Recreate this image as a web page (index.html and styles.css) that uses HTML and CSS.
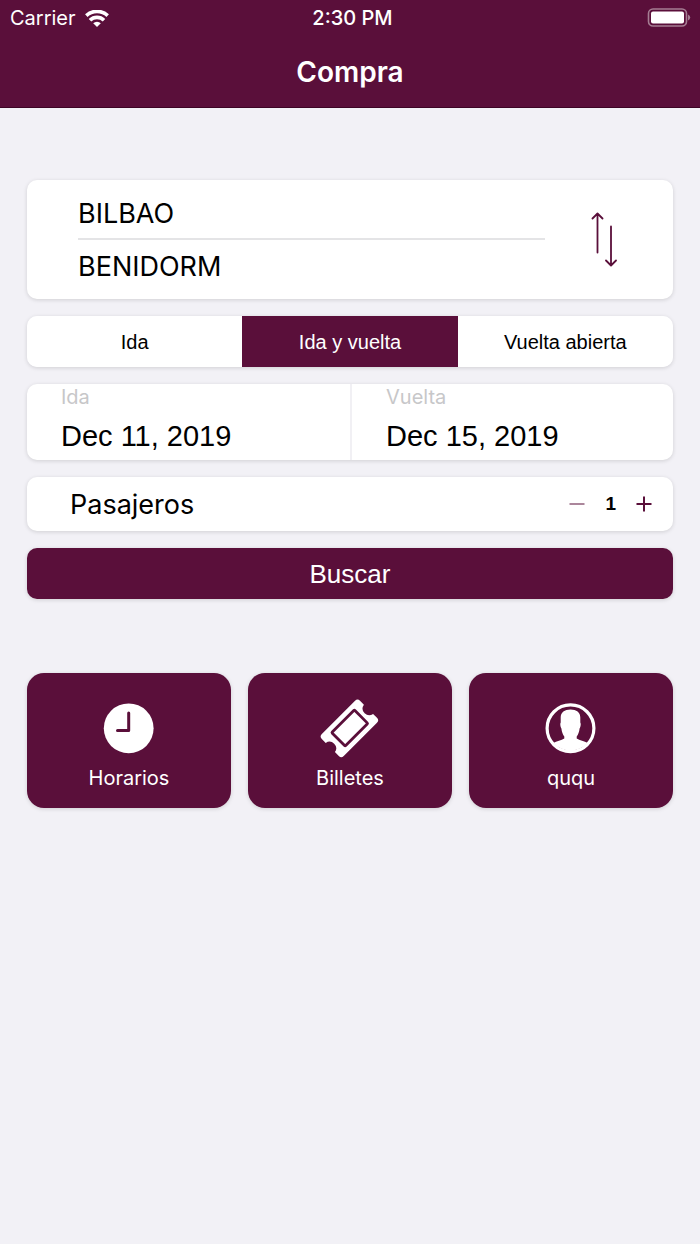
FILE: index.html
```html
<!DOCTYPE html>
<html lang="es">
<head>
<meta charset="utf-8">
<meta name="viewport" content="width=device-width, initial-scale=1">
<title>Compra</title>
<link rel="stylesheet" href="styles.css">
</head>
<body>
<header class="header">
  <div class="status">
    <div class="status-carrier">
      <span>Carrier</span>
      <svg class="wifi" viewBox="0 0 24 17" aria-hidden="true">
        <g fill="none" stroke="#fff" stroke-width="3.6">
          <path d="M1.3 5.600A15.600 15.600 0 0 1 22.700 5.600"/>
          <path d="M5 10.200A10 10 0 0 1 19 10.200"/>
        </g>
        <path fill="#fff" d="M12 17L8.200 13.200A5.400 5.400 0 0 1 15.800 13.200Z"/>
      </svg>
    </div>
    <time class="status-time">2:30 PM</time>
    <svg class="battery" viewBox="0 0 44 20" aria-hidden="true">
      <rect x="1.500" y="1" width="38" height="17" rx="4.5" fill="none" stroke="#a57d93" stroke-width="1.6"/>
      <rect x="4" y="3.5" width="33" height="12" rx="2" fill="#fff"/>
      <path d="M41 6.5Q43.2 7.4 43.2 9.5T41 12.500Z" fill="#a57d93"/>
    </svg>
  </div>
  <h1 class="title">Compra</h1>
</header>
<main class="main">
  <form class="search">
    <section class="card route">
      <div class="cities">
        <input class="city" type="text" value="BILBAO" aria-label="Origen">
        <input class="city" type="text" value="BENIDORM" aria-label="Destino">
      </div>
      <button class="swap" type="button" aria-label="Intercambiar">
        <svg class="swap-icon" viewBox="0 0 28 56" aria-hidden="true">
          <path d="M7.500 40.500V1.500M2.500 6.500L7.500 1.500L12.500 6.500M21 14.500V53M16 48.500L21 53.500L26 48.500"/>
        </svg>
      </button>
    </section>
    <fieldset class="card trip" aria-label="Tipo de viaje">
      <label class="trip-option"><input class="trip-radio" type="radio" name="trip"><span class="trip-text">Ida</span></label>
      <label class="trip-option"><input class="trip-radio" type="radio" name="trip" checked><span class="trip-text">Ida y vuelta</span></label>
      <label class="trip-option"><input class="trip-radio" type="radio" name="trip"><span class="trip-text">Vuelta abierta</span></label>
    </fieldset>
    <section class="card dates">
      <div class="date">
        <label class="date-label" for="depart">Ida</label>
        <input class="date-value" id="depart" type="text" value="Dec 11, 2019">
      </div>
      <div class="date">
        <label class="date-label" for="return">Vuelta</label>
        <input class="date-value" id="return" type="text" value="Dec 15, 2019">
      </div>
    </section>
    <section class="card passengers">
      <span class="passengers-label" id="passengers">Pasajeros</span>
      <div class="stepper" role="group" aria-labelledby="passengers">
        <button class="step" type="button" aria-label="Menos" disabled>
          <svg class="step-icon" viewBox="0 0 16 16" aria-hidden="true"><path d="M.5 8H15.500"/></svg>
        </button>
        <output class="count">1</output>
        <button class="step" type="button" aria-label="Más">
          <svg class="step-icon" viewBox="0 0 16 16" aria-hidden="true"><path d="M.5 8H15.500M8 .5V15.500"/></svg>
        </button>
      </div>
    </section>
    <button class="submit" type="button">Buscar</button>
  </form>
  <nav class="tiles">
    <a class="tile" href="#horarios">
      <svg class="tile-icon" viewBox="0 0 60 60" aria-hidden="true">
        <circle cx="29.700" cy="30.300" r="24.900" fill="#fff"/>
        <path d="M29.700 15V32.500H18.500" fill="none" stroke="#5a0f3a" stroke-width="3" stroke-linecap="round" stroke-linejoin="round"/>
      </svg>
      <span>Horarios</span>
    </a>
    <a class="tile" href="#billetes">
      <svg class="tile-icon" viewBox="0 0 60 60" aria-hidden="true">
        <g transform="translate(-.6 .4) rotate(-45 30 30)">
          <path fill="#fff" d="M6.500 14.500H53.500Q57 14.500 57 18V23.500A6.600 6.600 0 0 0 57 36.500V42Q57 45.500 53.500 45.500H6.500Q3 45.500 3 42V36.500A6.600 6.600 0 0 0 3 23.500V18Q3 14.500 6.500 14.500Z"/>
          <rect x="14.500" y="20.500" width="32" height="19" rx=".8" fill="none" stroke="#5a0f3a" stroke-width="2.800"/>
        </g>
      </svg>
      <span>Billetes</span>
    </a>
    <a class="tile" href="#perfil">
      <svg class="tile-icon" viewBox="0 0 60 60" aria-hidden="true">
        <circle cx="29.500" cy="30.300" r="23.400" fill="none" stroke="#fff" stroke-width="3.200"/>
        <path fill="#fff" d="M29.500 11.500C35.500 11.500 39.500 14.500 39.300 20V24.500C40.100 25.500 39.700 28.500 38.600 30.500C38.200 34 37.200 36.500 35.700 38.500V40.500C38.500 42.500 43.500 43 46.700 45A23.500 23.500 0 0 1 12.300 45C15.500 43 20.500 42.500 23.300 40.500V38.500C21.800 36.500 20.800 34 20.400 30.500C19.300 28.500 18.900 25.500 19.700 24.500V20C19.500 14.500 23.500 11.500 29.500 11.500Z"/>
      </svg>
      <span>ququ</span>
    </a>
  </nav>
</main>
</body>
</html>
```
FILE: styles.css
```css
:root {
  --brand: #5a0f3a;
  --page: #f2f1f6;
  --sans: Inter, Roboto, sans-serif;
  --arial: "Liberation Sans", Arial, sans-serif;
}
* { box-sizing: border-box; }
body {
  margin: 0;
  background: var(--page);
  color: #000;
  font-family: var(--sans);
}
button, input { font: inherit; color: inherit; margin: 0; padding: 0; border: 0; background: none; }
button { cursor: pointer; }
.header {
  background: var(--brand);
  color: #fff;
  border-bottom: 1px solid #3d0425;
}
.status {
  display: grid;
  grid-template-columns: 1fr auto 1fr;
  align-items: center;
  height: 36px;
  padding: 0 9px 0 10px;
  font-size: 20px;
}
.status-carrier { display: flex; align-items: center; gap: 9px; }
.wifi { width: 24px; height: 17px; }
.battery { width: 44px; height: 20px; justify-self: end; }
.status-time { font-weight: 500; padding-left: 4px; }
.title {
  margin: 0;
  padding-top: 1px;
  font-size: 28px;
  line-height: 70px;
  font-weight: 600;
  text-align: center;
}
.main { padding: 72px 27px; }
.search { display: flex; flex-direction: column; gap: 17px; }
.card {
  margin: 0;
  padding: 0;
  border: 0;
  border-radius: 10px;
  background: #fff;
  box-shadow: 0 1px 4px rgba(0, 0, 0, .14);
}
.route { display: flex; padding: 8px 0 7px 51px; }
.cities { flex: 1; min-width: 0; }
.city { display: block; width: 100%; height: 52px; font-size: 27px; }
.city:first-child { border-bottom: 2px solid #e4e4e6; }
.swap { width: 128px; display: grid; place-items: center; padding-right: 10px; }
.swap-icon { width: 28px; height: 56px; fill: none; stroke: var(--brand); stroke-width: 1.8; stroke-linecap: round; stroke-linejoin: round; }
.trip { display: grid; grid-template-columns: repeat(3, 1fr); overflow: hidden; min-width: 0; }
.trip-option { display: grid; }
.trip-radio { grid-area: 1 / 1; appearance: none; margin: 0; }
.trip-text {
  grid-area: 1 / 1;
  padding-top: 1px;
  font: 20px/50px var(--arial);
  text-align: center;
}
.trip-radio:checked + .trip-text { background: var(--brand); color: #fff; }
.dates { display: grid; grid-template-columns: 1fr 1fr; }
.date { display: flex; flex-direction: column; padding-left: 34px; min-width: 0; }
.date + .date { border-left: 2px solid #f1f0f4; }
.date-label { font-size: 20px; line-height: 26px; color: #c7c7c9; }
.date-value { width: 100%; height: 50px; padding-top: 2px; font-family: var(--arial); font-size: 29px; }
.passengers { display: flex; align-items: center; justify-content: space-between; height: 54px; padding: 0 21px 0 43px; }
.passengers-label { font-size: 27px; }
.stepper { display: flex; align-items: center; gap: 20px; }
.step { width: 16px; height: 16px; }
.step:disabled { opacity: .5; }
.step-icon { display: block; width: 16px; height: 16px; fill: none; stroke: var(--brand); stroke-width: 2; }
.count { font: bold 19px/24px var(--arial); }
.submit {
  height: 51px;
  padding-top: 2px;
  border-radius: 10px;
  background: var(--brand);
  color: #fff;
  font: 26px/49px var(--arial);
  box-shadow: 0 1px 4px rgba(0, 0, 0, .14);
}
.tiles { display: grid; grid-template-columns: repeat(3, 1fr); gap: 17px; margin-top: 74px; }
.tile {
  display: flex;
  flex-direction: column;
  align-items: center;
  gap: 7px;
  padding: 25px 0 16px;
  border-radius: 17px;
  background: var(--brand);
  color: #fff;
  font-size: 20px;
  line-height: 27px;
  text-decoration: none;
  box-shadow: 0 1px 4px rgba(0, 0, 0, .14);
}
.tile-icon { width: 60px; height: 60px; }
```
